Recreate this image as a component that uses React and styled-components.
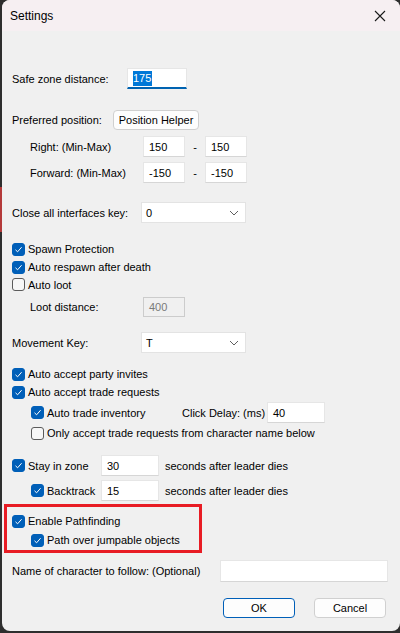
import React from 'react';
import styled, { createGlobalStyle } from 'styled-components';

const GlobalStyle = createGlobalStyle`
  html, body {
    margin: 0;
    padding: 0;
    height: 633px;
    overflow: hidden;
    background: linear-gradient(
      to bottom,
      #2e2e2e 0px,
      #2e2e2e 187px,
      #b43a3a 187px,
      #b43a3a 232px,
      #2e2e2e 232px
    );
  }
`;

const Window = styled.div`
  width: 398px;
  height: 631px;
  margin-left: 2px;
  background: #f0f0f0;
  border-radius: 8px;
  overflow: hidden;
  display: flex;
  flex-direction: column;
  font-family: "Liberation Sans", Arial, sans-serif;
  font-size: 11px;
  color: #000;
`;

const TitleBar = styled.div`
  height: 31px;
  flex: none;
  background: #f6eff2;
  display: flex;
  align-items: center;
  justify-content: space-between;
  padding: 0 10px 0 8px;
  font-size: 12px;
`;

const CloseGlyph = styled.div`
  width: 20px;
  height: 20px;
  display: flex;
  align-items: center;
  justify-content: center;
`;

const Content = styled.div`
  display: flex;
  flex-direction: column;
  padding-left: 10px;
`;

const Row = styled.div`
  display: flex;
  align-items: center;
  height: ${(p) => p.$h || 21}px;
  margin-top: ${(p) => p.$mt || 0}px;
  margin-left: ${(p) => p.$indent || 0}px;
  flex: none;
`;

const Label = styled.span`
  width: ${(p) => (p.$w ? `${p.$w}px` : 'auto')};
  margin-left: ${(p) => p.$ml || 0}px;
  flex: none;
  white-space: nowrap;
  display: flex;
  align-items: center;
`;

const TextBox = styled.div`
  width: ${(p) => p.$w}px;
  height: ${(p) => p.$h || 21}px;
  box-sizing: border-box;
  flex: none;
  background: ${(p) => (p.$disabled ? '#f0f0f0' : '#fff')};
  border: 1px solid ${(p) => (p.$disabled ? '#cccccc' : '#e6e6e6')};
  border-bottom: ${(p) => (p.$focused ? '2px solid #0063b1' : `1px solid ${p.$disabled ? '#cccccc' : '#d6d6d6'}`)};
  color: ${(p) => (p.$disabled ? '#7a7a7a' : '#000')};
  display: flex;
  align-items: center;
  padding-left: 5px;
`;

const Selected = styled.span`
  background: #0078d7;
  color: #fff;
  line-height: 15px;
  padding-right: 1px;
`;

const Dash = styled.span`
  width: 20px;
  text-align: center;
  flex: none;
`;

const Combo = styled.div`
  width: ${(p) => p.$w}px;
  height: 21px;
  box-sizing: border-box;
  flex: none;
  background: #fff;
  border: 1px solid #e3e3e3;
  display: flex;
  align-items: center;
  justify-content: space-between;
  padding: 0 6px 0 4px;
`;

const Box = styled.span`
  width: 13px;
  height: 13px;
  box-sizing: border-box;
  flex: none;
  border-radius: 3px;
  background: ${(p) => (p.$checked ? '#005fb8' : '#f7f7f7')};
  border: 1px solid ${(p) => (p.$checked ? '#005fb8' : '#5b5b5b')};
  display: flex;
  align-items: center;
  justify-content: center;
  margin-right: 3px;
`;

const PushButton = styled.div`
  width: ${(p) => p.$w}px;
  height: ${(p) => p.$h || 20}px;
  box-sizing: border-box;
  flex: none;
  background: #fdfdfd;
  border: 1px solid ${(p) => (p.$default ? '#005fb8' : '#d0d0d0')};
  border-radius: 4px;
  display: flex;
  align-items: center;
  justify-content: center;
`;

const Highlight = styled.div`
  width: 198px;
  height: 49px;
  box-sizing: border-box;
  border: 3px solid #e81c24;
  margin-left: -8px;
  margin-top: 3px;
  padding-left: 5px;
  display: flex;
  flex-direction: column;
`;

const Footer = styled.div`
  display: flex;
  gap: 19px;
  margin-top: 16px;
  margin-left: 211px;
`;

const Check = ({ checked, children }) => (
  <>
    <Box $checked={checked}>
      {checked && (
        <svg width="9" height="9" viewBox="0 0 9 9">
          <path d="M1.5 4.8 L3.6 6.8 L7.6 2.2" fill="none" stroke="#fff" strokeWidth="1" />
        </svg>
      )}
    </Box>
    <span>{children}</span>
  </>
);

const Chevron = () => (
  <svg width="10" height="6" viewBox="0 0 10 6">
    <path d="M1 1 L5 5 L9 1" fill="none" stroke="#606060" strokeWidth="1" />
  </svg>
);

export default function App() {
  return (
    <>
      <GlobalStyle />
      <Window>
        <TitleBar>
          <span>Settings</span>
          <CloseGlyph>
            <svg width="12" height="12" viewBox="0 0 12 12">
              <path d="M1 1 L11 11 M11 1 L1 11" stroke="#1a1a1a" strokeWidth="1.1" />
            </svg>
          </CloseGlyph>
        </TitleBar>
        <Content>
          <Row $mt={37}>
            <Label $w={115}>Safe zone distance:</Label>
            <TextBox $w={60} $focused>
              <Selected>175</Selected>
            </TextBox>
          </Row>

          <Row $mt={20}>
            <Label $w={101}>Preferred position:</Label>
            <PushButton $w={86}>Position Helper</PushButton>
          </Row>
          <Row $mt={6} $indent={18}>
            <Label $w={113}>Right: (Min-Max)</Label>
            <TextBox $w={42}>150</TextBox>
            <Dash>-</Dash>
            <TextBox $w={42}>150</TextBox>
          </Row>
          <Row $mt={5} $indent={18}>
            <Label $w={113}>Forward: (Min-Max)</Label>
            <TextBox $w={42}>-150</TextBox>
            <Dash>-</Dash>
            <TextBox $w={42}>-150</TextBox>
          </Row>

          <Row $mt={19}>
            <Label $w={129}>Close all interfaces key:</Label>
            <Combo $w={105}>
              <span>0</span>
              <Chevron />
            </Combo>
          </Row>

          <Row $mt={17} $h={18}>
            <Check checked>Spawn Protection</Check>
          </Row>
          <Row $h={18}>
            <Check checked>Auto respawn after death</Check>
          </Row>
          <Row $h={17}>
            <Check>Auto loot</Check>
          </Row>
          <Row $mt={4} $h={20} $indent={18}>
            <Label $w={113}>Loot distance:</Label>
            <TextBox $w={42} $h={20} $disabled>400</TextBox>
          </Row>

          <Row $mt={15}>
            <Label $w={129}>Movement Key:</Label>
            <Combo $w={105}>
              <span>T</span>
              <Chevron />
            </Combo>
          </Row>

          <Row $mt={12} $h={18}>
            <Check checked>Auto accept party invites</Check>
          </Row>
          <Row $h={18}>
            <Check checked>Auto accept trade requests</Check>
          </Row>
          <Row $mt={1} $indent={19}>
            <Label $w={151}>
              <Check checked>Auto trade inventory</Check>
            </Label>
            <Label $w={85}>Click Delay: (ms)</Label>
            <TextBox $w={58}>40</TextBox>
          </Row>
          <Row $mt={1} $h={18} $indent={19}>
            <Check>Only accept trade requests from character name below</Check>
          </Row>

          <Row $mt={13}>
            <Label $w={89}>
              <Check checked>Stay in zone</Check>
            </Label>
            <TextBox $w={58}>30</TextBox>
            <Label $ml={6}>seconds after leader dies</Label>
          </Row>
          <Row $mt={4} $indent={19}>
            <Label $w={70}>
              <Check checked>Backtrack</Check>
            </Label>
            <TextBox $w={58}>15</TextBox>
            <Label $ml={6}>seconds after leader dies</Label>
          </Row>

          <Highlight>
            <Row $mt={5} $h={18}>
              <Check checked>Enable Pathfinding</Check>
            </Row>
            <Row $mt={1} $h={18} $indent={19}>
              <Check checked>Path over jumpable objects</Check>
            </Row>
          </Highlight>

          <Row $mt={7} $h={22}>
            <Label $w={208}>Name of character to follow: (Optional)</Label>
            <TextBox $w={168} $h={22} />
          </Row>

          <Footer>
            <PushButton $w={72} $default>OK</PushButton>
            <PushButton $w={72}>Cancel</PushButton>
          </Footer>
        </Content>
      </Window>
    </>
  );
}
